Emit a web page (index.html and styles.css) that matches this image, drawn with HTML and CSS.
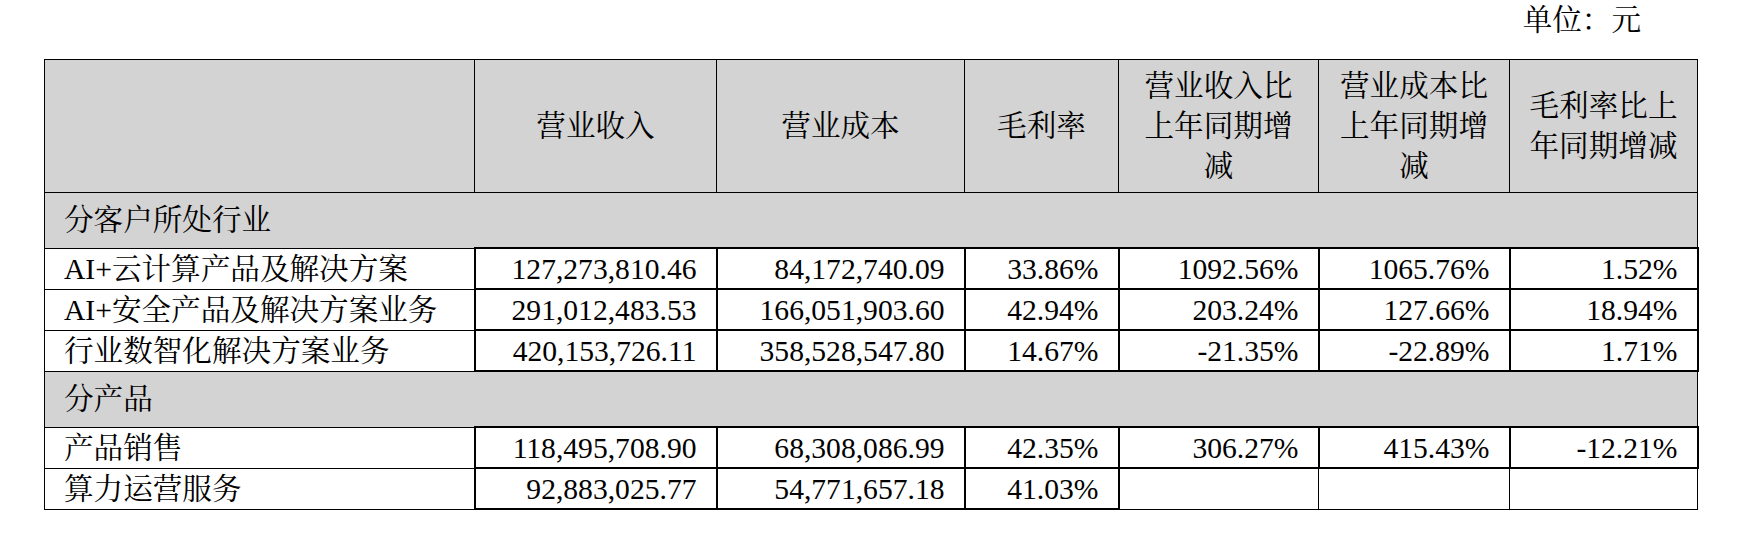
FILE: index.html
```html
<!DOCTYPE html>
<html lang="zh-CN">
<head>
<meta charset="utf-8">
<title>营业收入构成</title>
<link rel="stylesheet" href="styles.css">
</head>
<body>
<div class="page">
  <div class="unit">单位：元</div>
  <table class="report">
    <colgroup>
      <col class="c-label">
      <col class="c-rev">
      <col class="c-cost">
      <col class="c-gm">
      <col class="c-d1">
      <col class="c-d2">
      <col class="c-d3">
    </colgroup>
    <thead>
      <tr class="head">
        <th></th>
        <th>营业收入</th>
        <th>营业成本</th>
        <th>毛利率</th>
        <th>营业收入比<br>上年同期增<br>减</th>
        <th>营业成本比<br>上年同期增<br>减</th>
        <th>毛利率比上<br>年同期增减</th>
      </tr>
    </thead>
    <tbody>
      <tr class="section"><td colspan="7">分客户所处行业</td></tr>
      <tr class="row">
        <td class="label">AI+云计算产品及解决方案</td>
        <td class="num">127,273,810.46</td>
        <td class="num">84,172,740.09</td>
        <td class="num">33.86%</td>
        <td class="num">1092.56%</td>
        <td class="num">1065.76%</td>
        <td class="num">1.52%</td>
      </tr>
      <tr class="row">
        <td class="label">AI+安全产品及解决方案业务</td>
        <td class="num">291,012,483.53</td>
        <td class="num">166,051,903.60</td>
        <td class="num">42.94%</td>
        <td class="num">203.24%</td>
        <td class="num">127.66%</td>
        <td class="num">18.94%</td>
      </tr>
      <tr class="row">
        <td class="label">行业数智化解决方案业务</td>
        <td class="num">420,153,726.11</td>
        <td class="num">358,528,547.80</td>
        <td class="num">14.67%</td>
        <td class="num">-21.35%</td>
        <td class="num">-22.89%</td>
        <td class="num">1.71%</td>
      </tr>
      <tr class="section"><td colspan="7">分产品</td></tr>
      <tr class="row">
        <td class="label">产品销售</td>
        <td class="num">118,495,708.90</td>
        <td class="num">68,308,086.99</td>
        <td class="num">42.35%</td>
        <td class="num">306.27%</td>
        <td class="num">415.43%</td>
        <td class="num">-12.21%</td>
      </tr>
      <tr class="row">
        <td class="label">算力运营服务</td>
        <td class="num">92,883,025.77</td>
        <td class="num">54,771,657.18</td>
        <td class="num">41.03%</td>
        <td class="empty"></td>
        <td class="empty"></td>
        <td class="empty"></td>
      </tr>
    </tbody>
  </table>
</div>
</body>
</html>
```

FILE: styles.css
```css
html, body {
  margin: 0;
  padding: 0;
  background: #ffffff;
}

body {
  font-family: "Liberation Serif", "Noto Serif CJK SC", "Noto Sans CJK SC", serif;
  font-size: 29.6px;
  color: #000000;
}

.page {
  padding: 0 44px;
}

.unit {
  text-align: right;
  line-height: 40px;
  height: 40px;
  padding-right: 56px;
  margin-bottom: 19px;
}

.report {
  width: 1653px;
  table-layout: fixed;
  border-collapse: collapse;
  border: 1px solid #000;
}

.c-label { width: 430px; }
.c-rev { width: 242px; }
.c-cost { width: 248px; }
.c-gm { width: 154px; }
.c-d1 { width: 200px; }
.c-d2 { width: 191px; }
.c-d3 { width: 188px; }

.report th,
.report td {
  border: 1px solid #000;
  padding: 0 19px;
  line-height: 40px;
}

.head th {
  background: #d3d3d3;
  font-weight: normal;
  text-align: center;
  vertical-align: middle;
  height: 132px;
  padding: 0 4px;
  white-space: nowrap;
}

.section td {
  background: #d3d3d3;
  height: 54px;
  padding: 0 19px;
  text-align: left;
}

.row td {
  height: 37px;
  line-height: 35px;
  padding-top: 2px;
  padding-bottom: 0;
  vertical-align: middle;
}

.row .label {
  text-align: left;
  white-space: nowrap;
}

.row .num {
  text-align: right;
  border-width: 2px;
  white-space: nowrap;
}

.row .empty {
  border-width: 1px;
}
```
